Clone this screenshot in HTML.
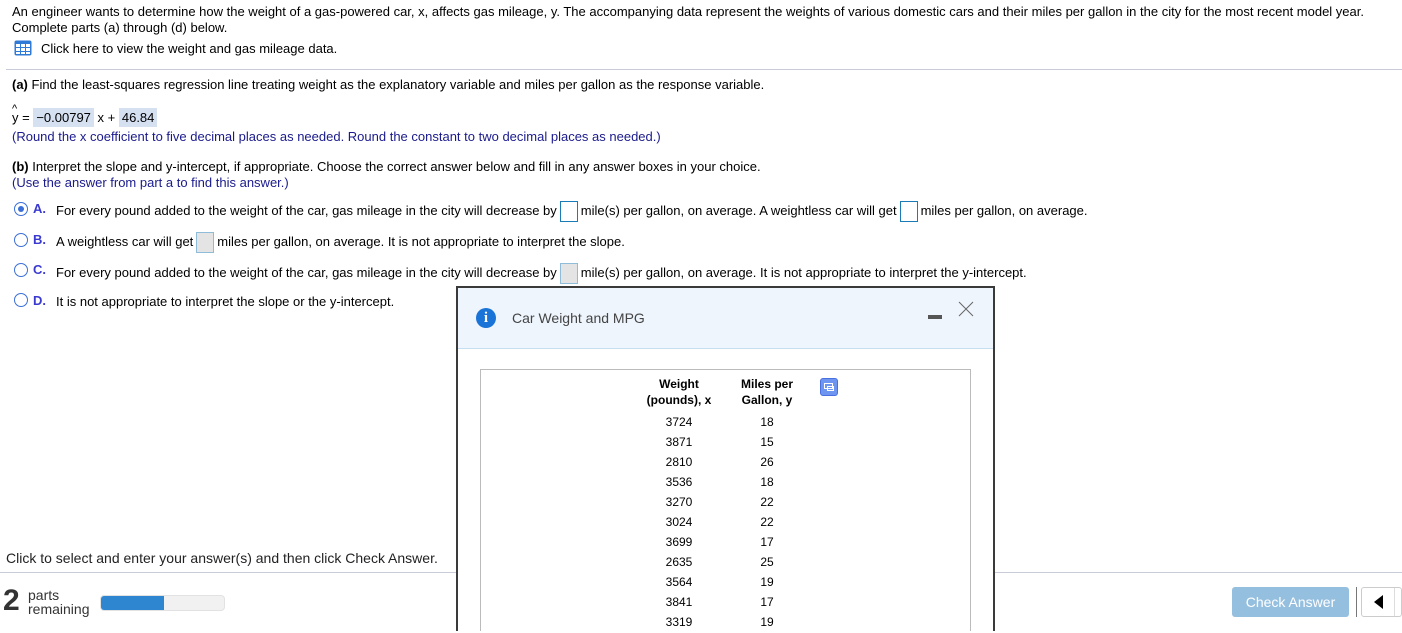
<!DOCTYPE html>
<html style="width:1402px;height:633px;overflow:hidden"><head><meta charset="utf-8"><style>
*{margin:0;padding:0;box-sizing:border-box}
body{width:1402px;height:633px;overflow:hidden;background:#fff;font-family:"Liberation Sans",Arial,sans-serif;font-size:13px;color:#000;position:relative}
.a{position:absolute;white-space:nowrap}
.blue{color:#1a1a8c}
.hl{background:#d5e0f1;padding:2px 3px}
.box{display:inline-block;width:18px;height:21px;border:1px solid #1b7bb6;vertical-align:middle;margin:0 3px}
.gbox{display:inline-block;width:18px;height:21px;border:1px solid #8fbcd8;background:#e4e4e4;vertical-align:middle;margin:0 3px}
.rad{position:absolute;width:14px;height:14px;border:1.5px solid #3b6fd8;border-radius:50%}
.lab{color:#3a3ad0;font-weight:bold}
td{text-align:center;font-size:12px;height:20px}
</style></head><body>
<div class="a" style="left:12px;top:4px">An engineer wants to determine how the weight of a gas-powered car, x, affects gas mileage, y. The accompanying data represent the weights of various domestic cars and their miles per gallon in the city for the most recent model year.</div>
<div class="a" style="left:12px;top:20px">Complete parts (a) through (d) below.</div>
<svg class="a" style="left:14px;top:40px" width="18" height="16" viewBox="0 0 18 16"><rect x="0.5" y="0.5" width="17" height="15" rx="2" fill="#2f7ad6"/><g fill="#fff"><rect x="2" y="4" width="4" height="3"/><rect x="7" y="4" width="4" height="3"/><rect x="12" y="4" width="4" height="3"/><rect x="2" y="8" width="4" height="3"/><rect x="7" y="8" width="4" height="3"/><rect x="12" y="8" width="4" height="3"/><rect x="2" y="12" width="4" height="2"/><rect x="7" y="12" width="4" height="2"/><rect x="12" y="12" width="4" height="2"/></g></svg>
<div class="a" style="left:41px;top:41px">Click here to view the weight and gas mileage data.</div>
<div class="a" style="left:6px;top:69px;width:1396px;height:1px;background:#c8cbd8"></div>
<div class="a" style="left:12px;top:77px"><b>(a)</b> Find the least-squares regression line treating weight as the explanatory variable and miles per gallon as the response variable.</div>
<div class="a" style="left:12px;top:103px;font-size:11px">^</div>
<div class="a" style="left:12px;top:110px">y = <span class="hl">&minus;0.00797</span> x + <span class="hl">46.84</span></div>
<div class="a blue" style="left:12px;top:129px">(Round the x coefficient to five decimal places as needed. Round the constant to two decimal places as needed.)</div>
<div class="a" style="left:12px;top:159px"><b>(b)</b> Interpret the slope and y-intercept, if appropriate. Choose the correct answer below and fill in any answer boxes in your choice.</div>
<div class="a blue" style="left:12px;top:175px">(Use the answer from part a to find this answer.)</div>
<div class="rad" style="left:14px;top:202px"><div style="position:absolute;left:2.5px;top:2.5px;width:6px;height:6px;border-radius:50%;background:#3b6fd8"></div></div>
<div class="a lab" style="left:33px;top:201px">A.</div>
<div class="a" style="left:56px;top:199px;line-height:24px">For every pound added to the weight of the car, gas mileage in the city will decrease by<span class="box"></span>mile(s) per gallon, on average. A weightless car will get<span class="box"></span>miles per gallon, on average.</div>
<div class="rad" style="left:14px;top:233px"></div>
<div class="a lab" style="left:33px;top:232px">B.</div>
<div class="a" style="left:56px;top:230px;line-height:24px">A weightless car will get<span class="gbox"></span>miles per gallon, on average. It is not appropriate to interpret the slope.</div>
<div class="rad" style="left:14px;top:263px"></div>
<div class="a lab" style="left:33px;top:262px">C.</div>
<div class="a" style="left:56px;top:261px;line-height:24px">For every pound added to the weight of the car, gas mileage in the city will decrease by<span class="gbox"></span>mile(s) per gallon, on average. It is not appropriate to interpret the y-intercept.</div>
<div class="rad" style="left:14px;top:293px"></div>
<div class="a lab" style="left:33px;top:293px">D.</div>
<div class="a" style="left:56px;top:294px">It is not appropriate to interpret the slope or the y-intercept.</div>
<div class="a" style="left:6px;top:550px;font-size:14px;color:#222">Click to select and enter your answer(s) and then click Check Answer.</div>
<div class="a" style="left:0;top:572px;width:1402px;height:1px;background:#c8cbd8"></div>
<div class="a" style="left:3px;top:584px;font-size:30px;font-weight:bold;color:#333;line-height:34px">2</div>
<div class="a" style="left:28px;top:588px;font-size:14px;color:#333;line-height:14px">parts<br>remaining</div>
<div class="a" style="left:100px;top:595px;width:125px;height:16px;border-radius:4px;background:#f1f1f1;border:1px solid #e2e2e2;overflow:hidden"><div style="width:63px;height:100%;background:#2f86d0"></div></div>
<div class="a" style="left:1232px;top:587px;width:117px;height:30px;border-radius:3px;background:#95bfdf;color:#fff;font-size:14px;text-align:center;line-height:30px">Check Answer</div>
<div class="a" style="left:1356px;top:587px;width:1px;height:30px;background:#777"></div>
<div class="a" style="left:1361px;top:587px;width:41px;height:30px;border:1px solid #ccc;border-radius:3px;background:#fff"></div>
<svg class="a" style="left:1373px;top:595px" width="12" height="14"><polygon points="10,0 10,14 1,7" fill="#000"/></svg>
<div class="a" style="left:1394px;top:588px;width:1px;height:28px;background:#ddd"></div>
<!-- dialog -->
<div class="a" style="left:456px;top:286px;width:539px;height:345px;border:2px solid #3a3a3a;border-bottom:none;background:#fff;overflow:hidden">
 <div style="position:absolute;left:0;top:0;width:100%;height:61px;background:#eef5fd;border-bottom:1px solid #c6dff0"></div>
 <div style="position:absolute;left:18px;top:20px;width:20px;height:20px;border-radius:50%;background:#1a73d6;color:#fff;font-weight:bold;font-family:'Liberation Serif',serif;font-size:15px;text-align:center;line-height:20px">i</div>
 <div style="position:absolute;left:54px;top:22px;font-size:14px;color:#444">Car Weight and MPG</div>
 <div style="position:absolute;left:470px;top:27px;width:14px;height:4px;background:#555"></div>
 <svg style="position:absolute;left:500px;top:13px" width="16" height="16"><path d="M1 1L15 15M15 1L1 15" stroke="#666" stroke-width="1"/></svg>
 <div style="position:absolute;left:22px;top:81px;width:491px;height:262px;border:1px solid #bbb;border-bottom:none"></div>
 <div style="position:absolute;left:362px;top:90px;width:18px;height:18px;border-radius:3px;background:#6e95f0;border:1px solid #4a6fe0"><div style="position:absolute;left:3px;top:4px;width:9px;height:6px;border:1.5px solid #fff"></div><div style="position:absolute;left:6px;top:7px;width:7px;height:5px;border:1.5px solid #fff"></div></div>
 <table style="position:absolute;left:180px;top:88px;border-collapse:collapse">
  <tr><td style="width:82px;font-weight:bold;height:36px;line-height:16px;vertical-align:top">Weight<br>(pounds), x</td><td style="width:94px;font-weight:bold;line-height:16px;vertical-align:top">Miles per<br>Gallon, y</td></tr>
  <tr><td>3724</td><td>18</td></tr><tr><td>3871</td><td>15</td></tr><tr><td>2810</td><td>26</td></tr><tr><td>3536</td><td>18</td></tr><tr><td>3270</td><td>22</td></tr><tr><td>3024</td><td>22</td></tr><tr><td>3699</td><td>17</td></tr><tr><td>2635</td><td>25</td></tr><tr><td>3564</td><td>19</td></tr><tr><td>3841</td><td>17</td></tr><tr><td>3319</td><td>19</td></tr>
 </table>
</div>
</body></html>
